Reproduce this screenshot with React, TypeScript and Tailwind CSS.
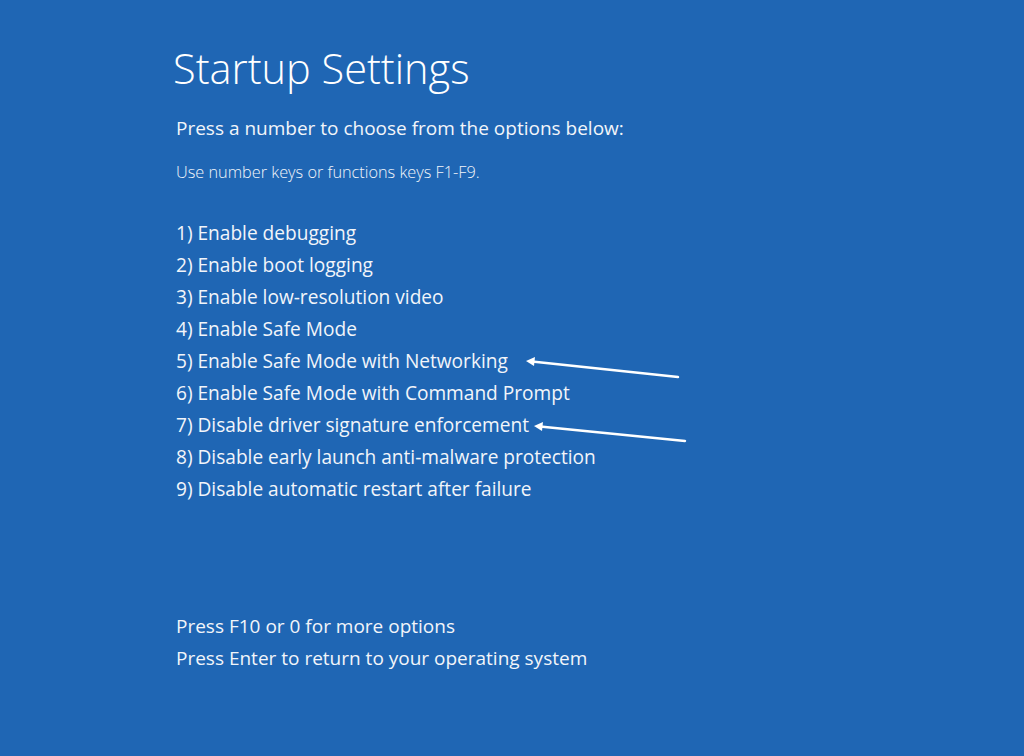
import React from "react";

const items = [
  "1) Enable debugging",
  "2) Enable boot logging",
  "3) Enable low-resolution video",
  "4) Enable Safe Mode",
  "5) Enable Safe Mode with Networking",
  "6) Enable Safe Mode with Command Prompt",
  "7) Disable driver signature enforcement",
  "8) Disable early launch anti-malware protection",
  "9) Disable automatic restart after failure",
];

function Arrow({ w, h }: { w: number; h: number }) {
  return (
    <svg width={w + 10} height={h + 10} className="pointer-events-none" viewBox={`-5 -5 ${w + 10} ${h + 10}`}>
      <line x1={w} y1={h} x2={6} y2={0.6} stroke="white" strokeWidth="2.5" strokeLinecap="round" />
      <polygon points={`0,0 9,-4 8,5`} fill="white" />
    </svg>
  );
}

export default function App() {
  return (
    <div
      className="w-[1024px] h-[756px] bg-[#1f66b4] text-[#f2f5fa] flex flex-col pl-[176px] overflow-hidden"
      style={{ fontFamily: '"Open Sans", "Noto Sans", sans-serif' }}
    >
      <h1 className="mt-[40px] -ml-[3px] text-[41.5px] leading-[56px] font-light text-white">Startup Settings</h1>
      <p className="mt-[20px] text-[19px] leading-[24px]">Press a number to choose from the options below:</p>
      <p className="mt-[23px] text-[16.3px] leading-[18px] font-light">Use number keys or functions keys F1-F9.</p>
      <ul className="mt-[36px] flex flex-col">
        {items.map((t, i) => (
          <li key={i} className="relative text-[19.1px] leading-[32px] whitespace-nowrap">
            {t}
            {i === 4 && (
              <span className="absolute left-[345px] top-[11px]">
                <Arrow w={152} h={16} />
              </span>
            )}
            {i === 6 && (
              <span className="absolute left-[353px] top-[12px]">
                <Arrow w={151} h={15} />
              </span>
            )}
          </li>
        ))}
      </ul>
      <div className="mt-[105px] flex flex-col">
        <p className="text-[19px] leading-[32px]">Press F10 or 0 for more options</p>
        <p className="text-[19px] leading-[32px]">Press Enter to return to your operating system</p>
      </div>
    </div>
  );
}
